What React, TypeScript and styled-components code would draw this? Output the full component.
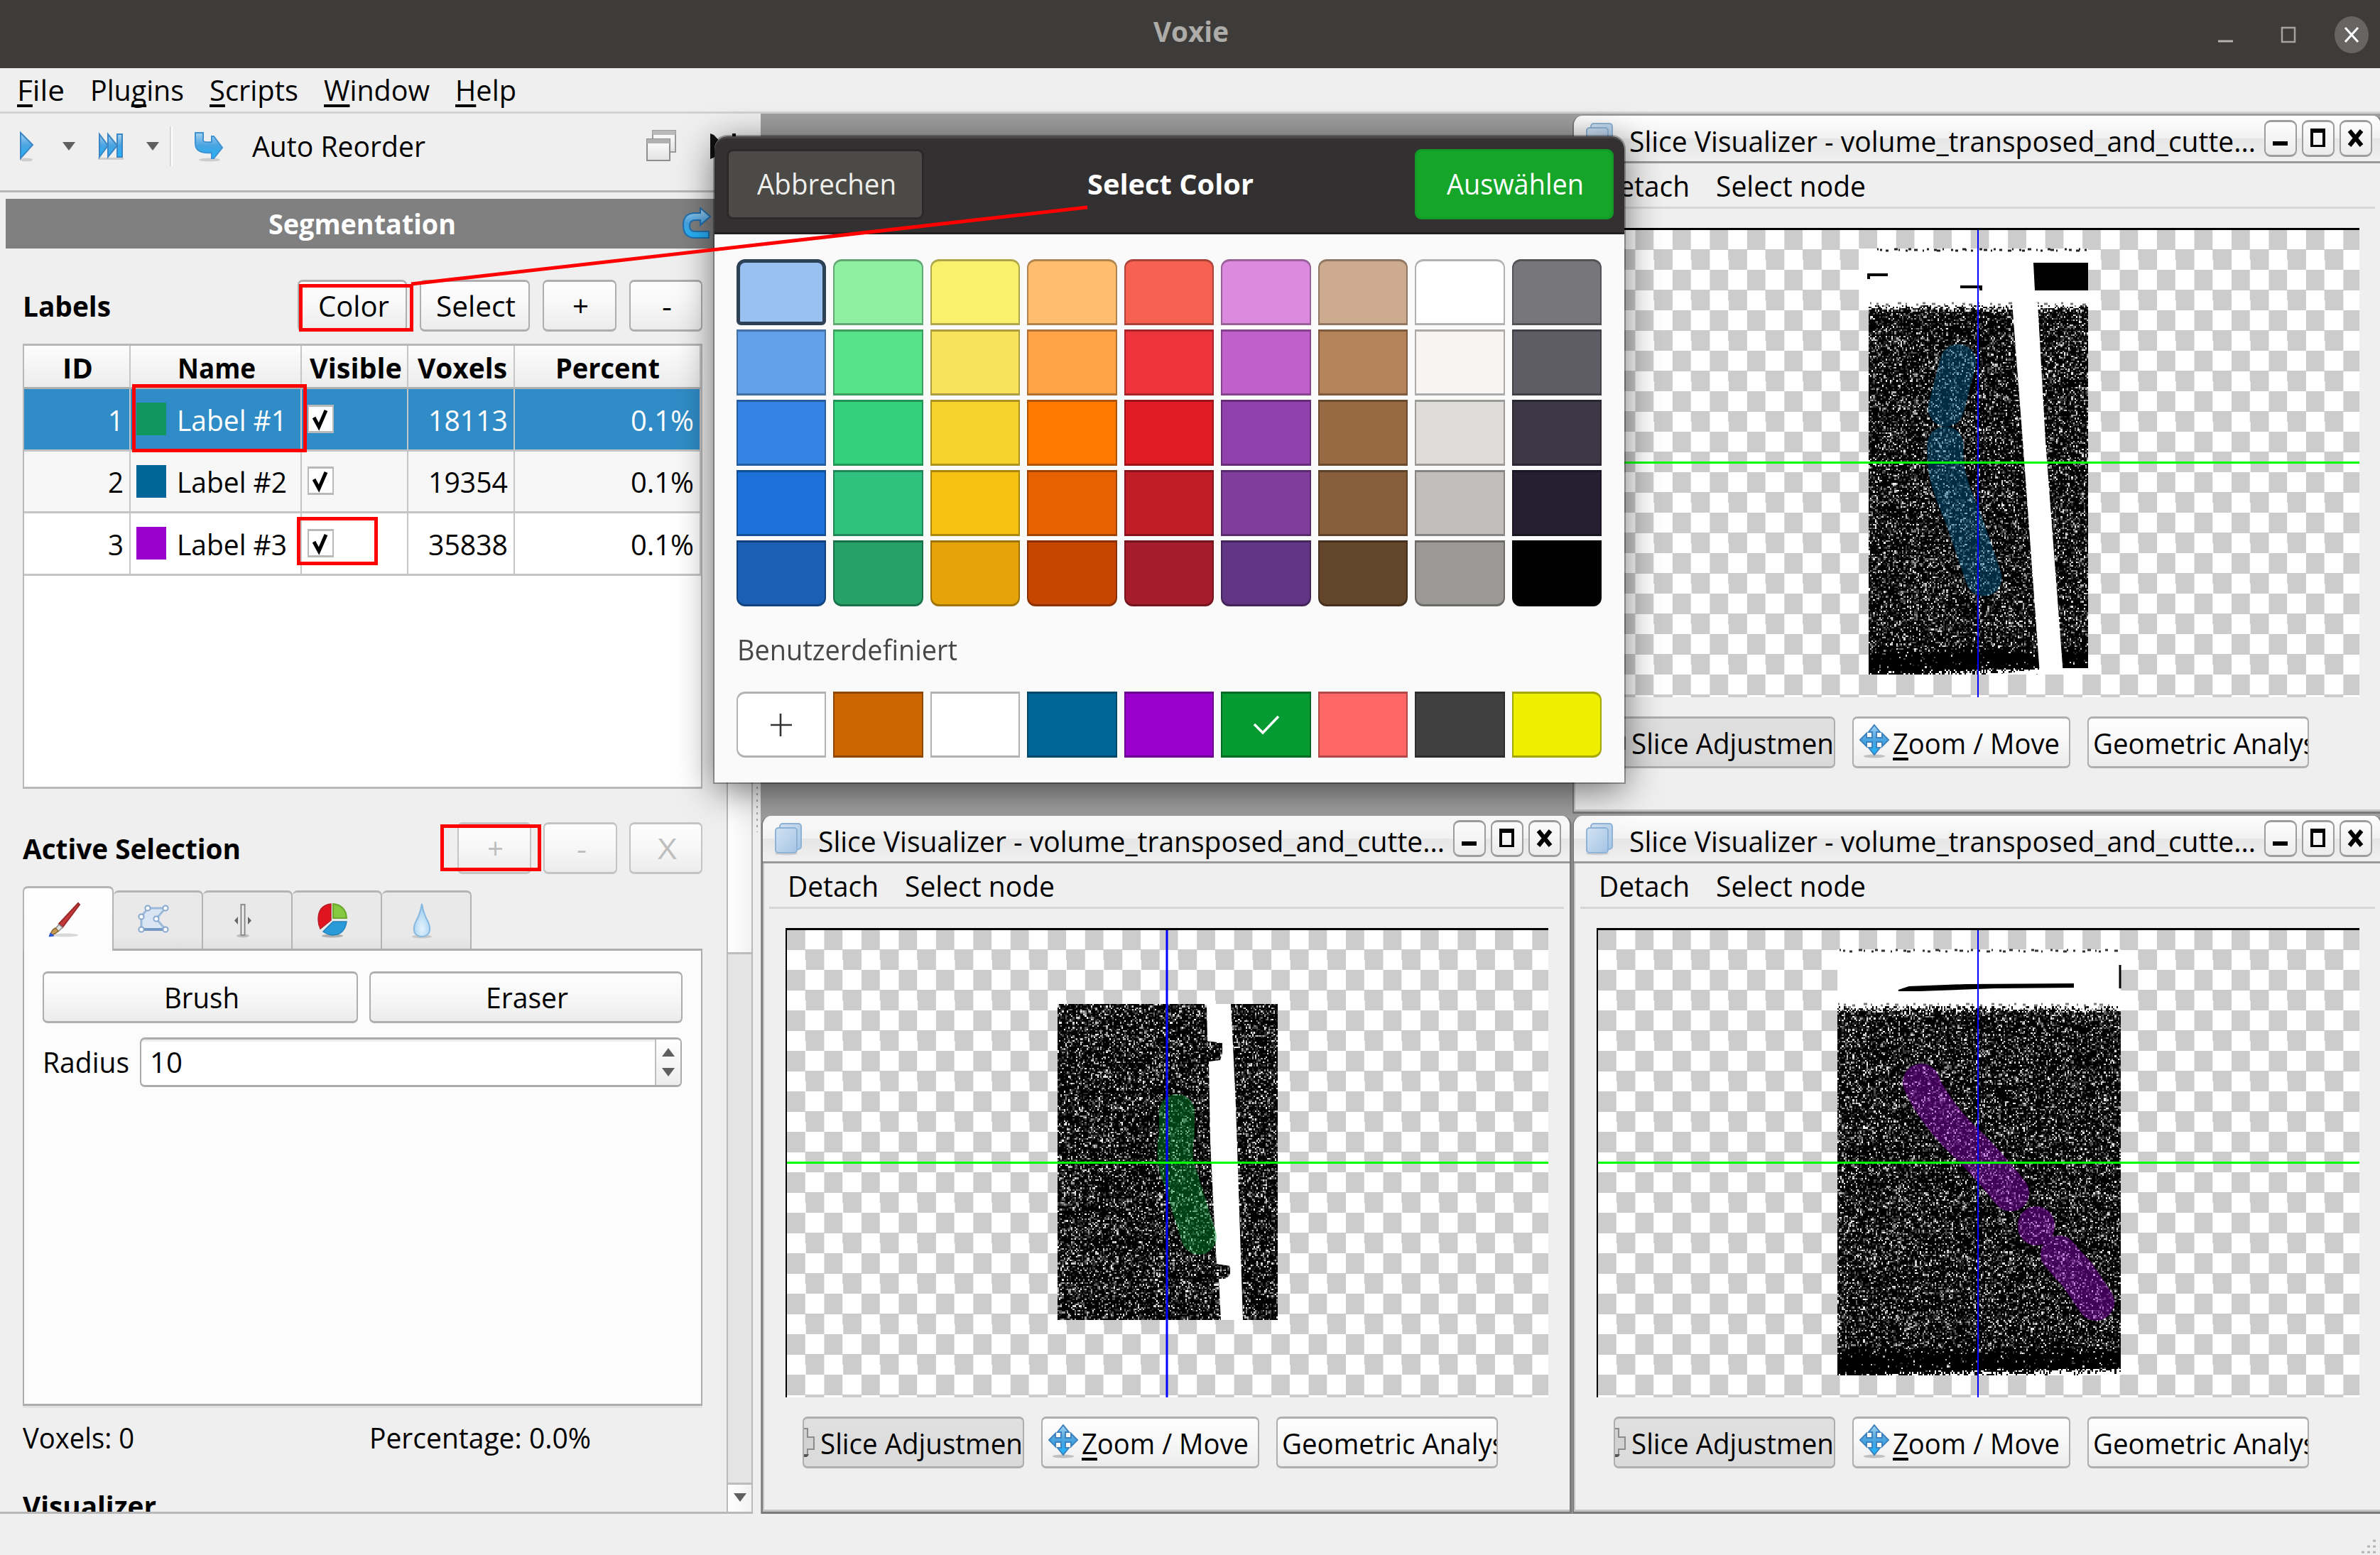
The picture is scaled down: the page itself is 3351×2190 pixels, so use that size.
import React, { useLayoutEffect, useRef } from "react";
import styled, { createGlobalStyle, css } from "styled-components";

const Global = createGlobalStyle`
  html, body { margin: 0; padding: 0; background: #efefef; }
  *, *::before, *::after { box-sizing: border-box; }
  body {
    font-family: "Open Sans", "Noto Sans", sans-serif;
    font-size: 40px;
    line-height: 56px;
    color: #000;
    overflow: hidden;
  }
`;

/* ---------- text that is fitted to a given advance width ---------- */

const FitBox = styled.span<{ $w: number; $bold?: boolean; $color?: string }>`
  display: block;
  flex: none;
  width: ${(p) => p.$w + 3}px;
  margin: 0 -3px 0 0;
  height: 56px;
  white-space: nowrap;
  font-weight: ${(p) => (p.$bold ? 700 : 400)};
  color: ${(p) => p.$color || "inherit"};
`;

const FitInner = styled.span`
  display: inline-block;
  transform-origin: 0 50%;
`;

const Mnemonic = styled.span`
  text-decoration: underline;
  text-decoration-thickness: 4px;
  text-underline-offset: 5px;
  text-decoration-skip-ink: none;
`;

type FitProps = { w: number; bold?: boolean; color?: string; children: React.ReactNode };

function Fit({ w, bold, color, children }: FitProps) {
  const ref = useRef<HTMLSpanElement>(null);
  useLayoutEffect(() => {
    const el = ref.current;
    if (!el) return;
    el.style.transform = "none";
    const natural = el.getBoundingClientRect().width;
    if (natural > 0) el.style.transform = `scaleX(${(w + 3) / natural})`;
  }, [w, children]);
  return (
    <FitBox $w={w} $bold={bold} $color={color}>
      <FitInner ref={ref}>{children}</FitInner>
    </FitBox>
  );
}

/* ---------- frame ---------- */

const Page = styled.div`
  position: relative;
  width: 3351px;
  height: 2190px;
  display: flex;
  flex-direction: column;
  overflow: hidden;
  background: #efefef;
`;

const TitleBar = styled.header`
  flex: none;
  height: 96px;
  display: grid;
  grid-template-columns: 1fr auto 1fr;
  align-items: center;
  padding-bottom: 9px;
  background: #3e3c3a;
`;

const TitleButtons = styled.div`
  display: flex;
  justify-content: flex-end;
  padding-right: 14px;
`;

const MenuBar = styled.nav`
  flex: none;
  height: 64px;
  display: flex;
  align-items: center;
  gap: 39px;
  padding-left: 24px;
  border-bottom: 3px solid #d2d2d2;
`;

const Body = styled.div`
  flex: none;
  height: 1972px;
  display: flex;
`;

const StatusBar = styled.footer`
  flex: 1;
  display: flex;
  justify-content: flex-end;
  align-items: flex-end;
`;

/* ---------- left side ---------- */

const SidePanel = styled.aside`
  flex: none;
  width: 1060px;
  display: flex;
  flex-direction: column;
  border-bottom: 3px solid #b8b8b8;
`;

const Splitter = styled.div`
  flex: none;
  width: 11px;
  display: flex;
  justify-content: center;
  padding: 930px 0 960px;
  &::after {
    content: "";
    width: 2px;
    background: repeating-linear-gradient(#a5a5a5 0 3px, transparent 3px 9px);
  }
`;

const ToolBar = styled.div`
  flex: none;
  height: 111px;
  display: flex;
  align-items: flex-start;
  padding: 16px 0 0 22px;
  border-bottom: 3px solid #b6b6b6;
`;

const ToolGroup = styled.div<{ $ml?: number }>`
  display: flex;
  align-items: center;
  height: 60px;
  margin-left: ${(p) => p.$ml || 0}px;
`;

const ToolSeparator = styled.div`
  width: 4px;
  height: 56px;
  margin: 2px 0 0 14px;
  border-left: 2px solid #d8d8d8;
  border-right: 2px solid #fff;
`;

const DockTitle = styled.div`
  flex: none;
  height: 70px;
  margin: 9px 0 0 8px;
  padding: 0 59px 0 370px;
  display: flex;
  align-items: center;
  justify-content: space-between;
  background: #808080;
  color: #fff;
`;

const DockBody = styled.div`
  flex: 1;
  min-height: 0;
  display: flex;
`;

const DockContent = styled.div`
  width: 1023px;
  padding: 44px 34px 0 32px;
  overflow: hidden;
  display: flex;
  flex-direction: column;
`;

const ScrollBar = styled.div`
  width: 37px;
  display: flex;
  flex-direction: column;
  border: solid #b9b9b9;
  border-width: 0 2px;
  background: #e4e4e4;
`;

const ScrollHandle = styled.div`
  height: 994px;
  background: linear-gradient(90deg, #fff, #f2f2f2);
  border-bottom: 3px solid #bcbcbc;
`;

const ScrollStep = styled.div`
  height: 41px;
  margin-top: auto;
  display: flex;
  align-items: center;
  justify-content: center;
  padding-bottom: 2px;
  border-top: 3px solid #bcbcbc;
  background: linear-gradient(90deg, #fff, #f2f2f2);
`;

const HeadRow = styled.div<{ $mt?: number; $gap: number }>`
  flex: none;
  height: 73px;
  margin-top: ${(p) => p.$mt || 0}px;
  display: flex;
  align-items: center;
  gap: ${(p) => p.$gap}px;
`;

const Spacer = styled.div`
  flex: 1;
`;

const raised = css`
  background: linear-gradient(#fefefe, #f8f8f8 45%, #ececec);
  border: solid #aeaeae;
  border-width: 3px 2px;
  border-radius: 7px;
`;

const PushButton = styled.div<{ $w: number; $disabled?: boolean }>`
  ${raised}
  flex: none;
  width: ${(p) => p.$w}px;
  height: 73px;
  display: flex;
  align-items: center;
  justify-content: center;
  ${(p) => p.$disabled && "color: #bebebe; border-color: #c4c4c4;"}
`;

/* ---------- label table ---------- */

const Table = styled.div`
  flex: none;
  height: 627px;
  margin-top: 17px;
  border: solid #b8b8b8;
  border-width: 3px 2px;
  background: #fff;
`;

const columns = "150px 241px 150px 150px 1fr";

const TableHead = styled.div`
  display: grid;
  grid-template-columns: ${columns};
  height: 61px;
  border-bottom: 3px solid #aeaeae;
  background: linear-gradient(#fdfdfd, #ececec);
`;

const HeadCell = styled.div`
  display: flex;
  align-items: center;
  justify-content: center;
  padding-top: 3px;
  border-right: 2px solid #c6c6c6;
  &:last-child { padding-right: 3px; }
`;

const TableRow = styled.div<{ $tone?: "selected" | "alt" }>`
  display: grid;
  grid-template-columns: ${columns};
  height: ${(p) => (p.$tone === "alt" ? 87 : 88)}px;
  border-bottom: 3px solid #c4c4c4;
  background: ${(p) =>
    p.$tone === "selected" ? "#308cc6" : p.$tone === "alt" ? "#f7f7f7" : "#fff"};
  color: ${(p) => (p.$tone === "selected" ? "#fff" : "#000")};
`;

const Cell = styled.div<{ $right?: boolean }>`
  display: flex;
  align-items: center;
  padding: 2px 11px 0 8px;
  justify-content: ${(p) => (p.$right ? "flex-end" : "flex-start")};
  border-right: 2px solid #c6c6c6;
`;

const Swatch = styled.span<{ $c: string }>`
  width: 42px;
  height: 46px;
  margin: -3px 15px 0 0;
  background: ${(p) => p.$c};
`;

const CheckBox = styled.span`
  width: 37px;
  height: 40px;
  margin-top: -4px;
  border: solid #b9b9b9;
  border-width: 3px 2px;
  background: #fff;
  display: flex;
`;

/* ---------- selection tools ---------- */

const Tabs = styled.div`
  flex: none;
  height: 88px;
  margin-top: 17px;
  display: flex;
  align-items: flex-end;
`;

const Tab = styled.div<{ $active?: boolean }>`
  width: ${(p) => (p.$active ? 128 : 126)}px;
  height: ${(p) => (p.$active ? 91 : 82)}px;
  margin-bottom: ${(p) => (p.$active ? -3 : 0)}px;
  position: relative;
  z-index: ${(p) => (p.$active ? 1 : 0)};
  display: flex;
  align-items: center;
  justify-content: center;
  padding: ${(p) => (p.$active ? "0 12px 3px 0" : "0 12px 2px 0")};
  border: solid #b4b4b4;
  border-width: 3px 2px 0 ${(p) => (p.$active ? 2 : 0)}px;
  border-radius: 7px 7px 0 0;
  background: ${(p) => (p.$active ? "linear-gradient(#fff, #fcfcfc)" : "linear-gradient(#e9e9e9 80%, #e0e0e0)")};
`;

const Pane = styled.div`
  flex: none;
  height: 644px;
  padding: 29px 27px 0 26px;
  border: solid #adadad;
  border-width: 3px 2px;
  background: #fcfcfc;
  box-shadow: 0 3px 0 #e2e2e2;
`;

const PaneRow = styled.div<{ $mt?: number; $gap: number }>`
  display: flex;
  align-items: center;
  gap: ${(p) => p.$gap}px;
  margin-top: ${(p) => p.$mt || 0}px;
`;

const SpinBox = styled.div`
  width: 763px;
  height: 70px;
  display: flex;
  align-items: center;
  justify-content: space-between;
  padding-left: 12px;
  border: solid #ababab;
  border-width: 3px 2px;
  border-radius: 7px;
  background: #fff;
  box-shadow: inset 0 3px 0 #eee;
  overflow: hidden;
`;

const SpinSteps = styled.div`
  width: 36px;
  height: 100%;
  display: flex;
  flex-direction: column;
  align-items: center;
  justify-content: center;
  gap: 16px;
  border-left: 2px solid #bdbdbd;
  background: linear-gradient(#fff, #ededed);
`;

const StatsRow = styled.div`
  flex: none;
  height: 90px;
  display: grid;
  grid-template-columns: 488px 1fr;
  align-items: center;
`;

const SectionTitle = styled.div`
  flex: none;
  height: 60px;
  margin-top: 23px;
`;

/* ---------- sub windows ---------- */

const Desktop = styled.main`
  flex: 1;
  position: relative;
  overflow: hidden;
  background: #9f9f9f;
`;

const SubWindow = styled.section<{ $x: number; $y: number }>`
  position: absolute;
  left: ${(p) => p.$x}px;
  top: ${(p) => p.$y}px;
  width: 1141px;
  height: 983px;
  display: flex;
  flex-direction: column;
  border: solid #7a7a7a;
  border-width: 0 3px 3px 2px;
  border-radius: 14px 14px 0 0;
  box-shadow: inset 2px -3px 0 #c4c4c4;
  background: #efefef;
  overflow: hidden;
`;

const SubTitle = styled.div`
  flex: none;
  height: 67px;
  display: flex;
  align-items: center;
  padding-left: 16px;
  border-bottom: 3px solid #999;
  background: linear-gradient(#ffffff, #f1f1f1 50%, #e6e6e6 50%, #f0f0f0);
`;

const SubTitleText = styled.div`
  margin: 8px 15px 0 22px;
`;

const SubButton = styled.span`
  width: 46px;
  height: 52px;
  margin-right: 7px;
  margin-top: -1px;
  display: flex;
  align-items: center;
  justify-content: center;
  border: solid #9d9d9d;
  border-width: 3px 2px;
  border-radius: 9px;
  background: linear-gradient(#fdfdfd, #ececec);
`;

const SubMenu = styled.div`
  flex: none;
  height: 64px;
  margin: 0 8px 0 9px;
  padding: 2px 0 0 26px;
  display: flex;
  align-items: center;
  gap: 40px;
  border-bottom: 3px solid #d6d6d6;
`;

const Viewport = styled.div`
  flex: none;
  position: relative;
  width: 1074px;
  height: 661px;
  margin: 27px 0 0 32px;
  border: solid #000;
  border-width: 3px 0 0 2px;
  background: repeating-conic-gradient(#fff 0 25%, #ccc 0 50%) 0 -1px / 52.48px 57px;
  overflow: hidden;
`;

const NoiseCanvas = styled.canvas<{ $x: number; $y: number; $w: number; $h: number }>`
  position: absolute;
  left: ${(p) => p.$x - 2}px;
  top: ${(p) => p.$y - 3}px;
  width: ${(p) => p.$w}px;
  height: ${(p) => p.$h}px;
  image-rendering: pixelated;
`;

const SliceDrawing = styled.svg`
  position: absolute;
  left: -2px;
  top: -3px;
`;

const SliceTools = styled.div`
  display: flex;
  gap: 24px;
  margin: 27px 0 0 56px;
`;

const SliceButton = styled.div<{ $w: number; $pressed?: boolean }>`
  ${raised}
  width: ${(p) => p.$w}px;
  height: 73px;
  padding-top: 2px;
  display: flex;
  align-items: center;
  overflow: hidden;
  ${(p) => p.$pressed && "background: linear-gradient(#e0e0e0, #dadada);"}
`;

const PressedIcon = styled.span`
  display: flex;
  margin-right: 1px;
`;

const ButtonIcon = styled.span`
  display: flex;
  margin: -6px 5px 0 8px;
`;

const ClippedLabel = styled.div`
  padding-left: 6px;
`;

/* ---------- colour dialog ---------- */

const Dialog = styled.div`
  position: absolute;
  left: 1006px;
  top: 192px;
  width: 1281px;
  height: 910px;
  border-radius: 18px 18px 0 0;
  background: #fafafa;
  box-shadow: 0 0 0 2px rgba(0, 0, 0, 0.3), 0 10px 52px rgba(0, 0, 0, 0.55);
`;

const DialogHeader = styled.div`
  height: 138px;
  display: flex;
  align-items: center;
  justify-content: space-between;
  padding: 0 15px 4px 17px;
  border-top: 3px solid #474545;
  border-bottom: 3px solid #211f1f;
  border-radius: 18px 18px 0 0;
  background: #323030;
  color: #fff;
`;

const DialogButton = styled.div<{ $w: number; $primary?: boolean }>`
  width: ${(p) => p.$w}px;
  height: 99px;
  display: flex;
  align-items: center;
  justify-content: center;
  padding-bottom: 1px;
  border: 3px solid ${(p) => (p.$primary ? "#129a26" : "#2a2828")};
  border-radius: 9px;
  background: ${(p) => (p.$primary ? "#14a529" : "#4b4a47")};
  color: ${(p) => (p.$primary ? "#fff" : "#eeeeec")};
`;

const Palette = styled.div`
  display: grid;
  grid-template-columns: repeat(9, 126.2px);
  grid-auto-rows: 93px;
  gap: 6px 10.3px;
  padding: 35px 0 0 31px;
`;

const Chip = styled.div<{ $c: string; $pos?: "top" | "bottom" | "left" | "right"; $focus?: boolean }>`
  display: flex;
  align-items: center;
  justify-content: center;
  background: ${(p) => p.$c};
  border: solid rgba(0, 0, 0, 0.3);
  border-width: 3px 2px;
  border-radius: ${(p) =>
    p.$pos === "top" ? "12px 12px 0 0"
    : p.$pos === "bottom" ? "0 0 12px 12px"
    : p.$pos === "left" ? "12px 0 0 12px"
    : p.$pos === "right" ? "0 12px 12px 0"
    : "0"};
  ${(p) => p.$focus && "border: 5px solid #2f4156; border-radius: 12px 12px 6px 6px;"}
`;

const CustomTitle = styled.div`
  height: 56px;
  margin: 33px 0 0 32px;
`;

const CustomRow = styled(Palette)`
  padding-top: 31px;
`;

const Annotations = styled.svg`
  position: absolute;
  left: 0;
  top: 0;
  pointer-events: none;
`;

/* ---------- icons ---------- */

const Triangle = ({ up }: { up?: boolean }) => (
  <svg width="20" height="12" viewBox="0 0 20 12">
    <path d={up ? "M1 12 10 0 19 12Z" : "M1 0 10 12 19 0Z"} fill="#5f5f5f" />
  </svg>
);

const BlueGradient = ({ id }: { id: string }) => (
  <linearGradient id={id} x1="0" y1="0" x2="0" y2="1">
    <stop offset="0" stopColor="#a4d2f2" />
    <stop offset="0.5" stopColor="#4aa3e0" />
    <stop offset="1" stopColor="#1fb4fb" />
  </linearGradient>
);

const PlayIcon = () => (
  <svg width="30" height="48" viewBox="0 0 30 48">
    <defs><BlueGradient id="play" /></defs>
    <ellipse cx="15" cy="43" rx="9" ry="2.5" fill="#000" opacity="0.14" />
    <path d="M7 5 24 22 7 41Z" fill="url(#play)" stroke="#3b86c4" strokeWidth="2" />
  </svg>
);

const SkipIcon = () => (
  <svg width="42" height="48" viewBox="0 0 42 48">
    <defs><BlueGradient id="skip" /></defs>
    <rect x="3" y="40" width="36" height="3" fill="#000" opacity="0.14" />
    <path d="M5 7 17 23 5 39ZM17 7 30 23 17 39ZM30 7H37V39H30Z" fill="url(#skip)" stroke="#3b86c4" strokeWidth="2" />
  </svg>
);

const ReorderIcon = () => (
  <svg width="44" height="48" viewBox="0 0 44 48">
    <defs><BlueGradient id="reorder" /></defs>
    <ellipse cx="23" cy="43" rx="15" ry="2.5" fill="#000" opacity="0.14" />
    <path d="M3 5H14V16Q15 19 26 18V10H29L41 26 29 41H26V33Q3 35 3 20Z" fill="url(#reorder)" stroke="#3f92d2" strokeWidth="2" />
  </svg>
);

const FloatIcon = () => (
  <svg width="46" height="48" viewBox="0 0 46 48">
    <defs>
      <linearGradient id="float" x1="0" y1="0" x2="0" y2="1">
        <stop offset="0" stopColor="#fff" /><stop offset="1" stopColor="#e2e2e2" />
      </linearGradient>
    </defs>
    <rect x="11" y="2" width="32" height="30" fill="url(#float)" stroke="#9a9a9a" strokeWidth="2" />
    <rect x="11" y="2" width="32" height="6" fill="#b9b9b9" />
    <rect x="3" y="14" width="32" height="30" fill="url(#float)" stroke="#8f8f8f" strokeWidth="2" />
    <rect x="3" y="14" width="32" height="6" fill="#b0b0b0" />
  </svg>
);

const StopIcon = () => (
  <svg width="40" height="36" viewBox="0 0 40 36">
    <path d="M0 0 5 2 20 18 5 34 0 36ZM31 0H36V36H31Z" fill="#111" />
  </svg>
);

const RevertIcon = () => (
  <svg width="42" height="46" viewBox="0 0 42 46">
    <defs><BlueGradient id="revert" /></defs>
    <path d="M27 1 41 13 27 25V18H20Q12 18 12 26Q12 34 20 34H39V43H20Q3 43 3 25Q3 8 20 8H27Z" fill="url(#revert)" stroke="#2270ae" strokeWidth="2" />
  </svg>
);

const CheckMark = () => (
  <svg width="33" height="34" viewBox="0 0 33 34">
    <path d="M7 15 14 28 24 5" fill="none" stroke="#000" strokeWidth="5" />
  </svg>
);

const BrushIcon = () => (
  <svg width="48" height="52" viewBox="0 0 48 52">
    <ellipse cx="26" cy="49" rx="18" ry="2.5" fill="#000" opacity="0.14" />
    <path d="M44 4 17 33 22 38 46 6Z" fill="#c43a3a" stroke="#9a2828" strokeWidth="2" />
    <path d="M17 34 12 40 16 44 22 38Z" fill="#e4e4e4" stroke="#8a8a8a" strokeWidth="1.5" />
    <path d="M12 39Q6 42 5 49Q12 48 16 43Z" fill="#c79a55" stroke="#8d6a34" strokeWidth="1.5" />
    <path d="M5 46 3 51 10 50Z" fill="#2a55d8" stroke="#2a55d8" />
  </svg>
);

const PolygonIcon = () => (
  <svg width="46" height="46" viewBox="0 0 46 46">
    <path d="M15 6H40L27 21 40 36H6V18Z" fill="#d9e5f2" stroke="#9bb9da" strokeWidth="3" />
    <path d="M6 36H40" stroke="#7599c4" strokeWidth="4" />
    {[[15, 6], [40, 6], [27, 21], [40, 36], [6, 36], [6, 18]].map(([x, y]) => (
      <circle key={`${x}-${y}`} cx={x} cy={y} r="3.6" fill="#fff" stroke="#86a8d0" strokeWidth="2" />
    ))}
  </svg>
);

const MirrorIcon = () => (
  <svg width="30" height="50" viewBox="0 0 30 50">
    <ellipse cx="15" cy="47" rx="9" ry="2.5" fill="#000" opacity="0.18" />
    <rect x="12.5" y="3" width="5" height="43" fill="#f4f4f4" stroke="#909090" strokeWidth="2.2" />
    <path d="M8 20V31L3 25.500ZM22 20V31L27 25.500Z" fill="#666" />
  </svg>
);

const PieIcon = () => (
  <svg width="46" height="50" viewBox="0 0 46 50">
    <ellipse cx="23" cy="47" rx="15" ry="2.5" fill="#000" opacity="0.25" />
    <path d="M21 25V2Q3 4 3 24Q3 31 6 37Z" fill="#e0141f" stroke="#b51c28" strokeWidth="1.5" />
    <path d="M24 22V2Q42 4 43 22Z" fill="#86c840" stroke="#69a82c" strokeWidth="2" />
    <path d="M24 27H43Q40 46 23 46Q15 45 10 41Z" fill="#2a9bd8" stroke="#1f80ba" strokeWidth="1.5" />
  </svg>
);

const DropIcon = () => (
  <svg width="32" height="52" viewBox="0 0 32 52">
    <defs><radialGradient id="drop" cx="0.5" cy="0.75" r="0.6"><stop offset="0" stopColor="#e4f3fd" /><stop offset="1" stopColor="#a4d0f0" /></radialGradient></defs>
    <ellipse cx="16" cy="49" rx="14" ry="2.5" fill="#000" opacity="0.14" />
    <path d="M16 3Q18 16 24 27Q29 36 26 44Q22 49 16 49Q10 49 6 44Q3 36 8 27Q14 16 16 3Z" fill="url(#drop)" stroke="#86b9e2" strokeWidth="2" />
  </svg>
);

const CubeIcon = () => (
  <svg width="40" height="48" viewBox="0 0 40 48">
    <defs><linearGradient id="cube" x1="0" y1="0" x2="1" y2="1"><stop offset="0" stopColor="#d3e3f3" /><stop offset="1" stopColor="#a4c4e4" /></linearGradient></defs>
    <ellipse cx="17" cy="45" rx="16" ry="2.5" fill="#000" opacity="0.12" />
    <rect x="8" y="3" width="30" height="36" rx="4" fill="url(#cube)" stroke="#8fb3d6" strokeWidth="2" />
    <rect x="2" y="9" width="30" height="35" rx="4" fill="url(#cube)" stroke="#8fb3d6" strokeWidth="2" />
  </svg>
);

const MoveIcon = () => (
  <svg width="42" height="48" viewBox="0 0 42 48">
    <defs><BlueGradient id="move" /></defs>
    <ellipse cx="21" cy="45" rx="15" ry="2.5" fill="#000" opacity="0.2" />
    <path d="M21 1 29 11H24V19H32V13L41 22 32 31V25H24V33H29L21 43 13 33H18V25H10V31L1 22 10 13V19H18V11H13Z" fill="url(#move)" stroke="#3c82bf" strokeWidth="2" />
  </svg>
);

const SliderIcon = () => (
  <svg width="22" height="50" viewBox="0 0 22 50">
    <path d="M0 4H5V16H14V33H5V42H0" fill="#d2d2d2" stroke="#8c8c8c" strokeWidth="2" />
    <path d="M0 40H7L4 44H0Z" fill="#555" />
  </svg>
);

/* ---------- slice images ---------- */

type NoiseProps = {
  x: number; y: number; w: number; h: number; seed: number;
  raggedTop?: boolean; darkBottom?: boolean;
};

// Draws the voxel noise at scan resolution; the canvas is enlarged with hard pixel edges.
function Noise({ x, y, w, h, seed, raggedTop, darkBottom }: NoiseProps) {
  const ref = useRef<HTMLCanvasElement>(null);
  const cols = Math.round(w / 2.14);
  const rows = Math.round(h / 2.3);
  useLayoutEffect(() => {
    const ctx = ref.current?.getContext("2d");
    if (!ctx) return;
    let state = seed;
    const rand = () => {
      state = (state * 1664525 + 1013904223) >>> 0;
      return state / 4294967296;
    };
    const image = ctx.createImageData(cols, rows);
    for (let r = 0; r < rows; r++) {
      const fromEnd = rows - r;
      let density = 0.35 + 0.05 * Math.sin(r / 3);
      if (darkBottom && fromEnd < 18) density = fromEnd < 14 ? 0.05 : 0.18;
      for (let c = 0; c < cols; c++) {
        let v = rand() < density ? 35 + 220 * Math.pow(rand(), 2) : 0;
        if (raggedTop && r < 5 && rand() > (r + 1) / 6) v = 255;
        if (darkBottom && fromEnd < 5 && rand() > (fromEnd + 4 - (c / cols) * 5) / 6) v = 255;
        const i = (r * cols + c) * 4;
        image.data[i] = image.data[i + 1] = image.data[i + 2] = v;
        image.data[i + 3] = 255;
      }
    }
    ctx.putImageData(image, 0, 0);
  }, []);
  return <NoiseCanvas ref={ref} width={cols} height={rows} $x={x} $y={y} $w={w} $h={h} />;
}

const speckle = (x0: number, x1: number, y: number, step: number) => {
  let d = "";
  for (let x = x0, i = 0; x < x1; x += step + ((i * 7) % 5) * 2, i++) d += `M${x} ${y + (i % 3)}h${2 + (i % 4)}`;
  return d;
};

const Crosshair = ({ x, w }: { x: number; w: number }) => (
  <>
    <path d={`M${x} 0V661`} stroke="#0000ff" strokeWidth={w} />
    <path d="M0 330.5H1074" stroke="#00ff00" strokeWidth="3" />
  </>
);

const BlueSlice = () => (
  <>
    <Noise x={383} y={106} w={309} h={523} seed={11} raggedTop darkBottom />
    <SliceDrawing width="1074" height="661" viewBox="0 0 1074 661">
      <path d="M369 29H692V109H383V88H369Z" fill="#fff" />
      <path d={speckle(395, 690, 30, 4)} stroke="#222" strokeWidth="3" />
      <path d={speckle(385, 690, 106, 9)} stroke="#777" strokeWidth="3" />
      <path d="M585 105H621L632 300 657 629H624L600 300Z" fill="#fff" />
      <path d="M600 629 692 627V620H640L560 629Z" fill="#fff" />
      <path d="M615 49H692V88H617Z" fill="#000" />
      <path d="M383 66H410M512 83H543" stroke="#000" strokeWidth="4" />
      <path d="M383 64V72M541 81V88" stroke="#000" strokeWidth="4" />
      <path stroke="#006699" strokeOpacity="0.42" fill="none" strokeLinecap="round" strokeLinejoin="round" strokeWidth="51"
        d="M509 189 Q502 215 492 254M491 305 Q490 330 495 352 Q504 382 516 408 L545 493" />
      <Crosshair x={537} w={2} />
    </SliceDrawing>
  </>
);

const GreenSlice = () => (
  <>
    <Noise x={383} y={107} w={310} h={445} seed={29} />
    <SliceDrawing width="1074" height="661" viewBox="0 0 1074 661">
      <path d="M593 107H627L630 165 634 250 639 400 644 552H613L610 494 620 494 626 488 626 476 607 473 604 420 598 300 596 188 612 186 615 176 615 162 594 159Z" fill="#fff" />
      <path stroke="#009933" strokeOpacity="0.42" fill="none" strokeLinecap="round" strokeLinejoin="round" strokeWidth="50"
        d="M551 259V290Q544 325 556 352 Q563 375 582 435" />
      <Crosshair x={537} w={3} />
    </SliceDrawing>
  </>
);

const PurpleSlice = () => (
  <>
    <Noise x={339} y={108} w={399} h={522} seed={53} raggedTop darkBottom />
    <SliceDrawing width="1074" height="661" viewBox="0 0 1074 661">
      <path d="M339 30H738V110H339Z" fill="#fff" />
      <path d={speckle(342, 736, 31, 5)} stroke="#333" strokeWidth="3" />
      <path d={speckle(340, 736, 107, 8)} stroke="#777" strokeWidth="3" />
      <path d="M425 88 440 83 520 80 671 79V83L560 84 455 88Z" fill="#000" stroke="#000" strokeWidth="2" />
      <path d="M737 52V85" stroke="#000" strokeWidth="3" />
      <path stroke="#9900cc" strokeOpacity="0.42" fill="none" strokeLinecap="round" strokeLinejoin="round" strokeWidth="52"
        d="M457 217 Q470 250 510 293 Q545 325 583 373M619 418V421M651 459 Q664 475 676 487 L703 527" />
      <Crosshair x={537} w={2} />
    </SliceDrawing>
  </>
);

function SliceWindow({ x, y, children }: { x: number; y: number; children: React.ReactNode }) {
  return (
    <SubWindow $x={x} $y={y}>
      <SubTitle>
        <CubeIcon />
        <SubTitleText><Fit w={879}>Slice Visualizer - volume_transposed_and_cutte...</Fit></SubTitleText>
        <SubButton><svg width="30" height="36"><rect x="4" y="22" width="21" height="6" fill="#000" /></svg></SubButton>
        <SubButton><svg width="30" height="36"><path d="M4 4H25V30H4ZM8 10V27H21V10Z" fill="#000" fillRule="evenodd" /></svg></SubButton>
        <SubButton><svg width="30" height="36"><path d="M6 7 23 28M23 7 6 28" stroke="#000" strokeWidth="6" /></svg></SubButton>
      </SubTitle>
      <SubMenu>
        <Fit w={125}>Detach</Fit>
        <Fit w={208}>Select node</Fit>
      </SubMenu>
      <Viewport>{children}</Viewport>
      <SliceTools>
        <SliceButton $w={312} $pressed><PressedIcon><SliderIcon /></PressedIcon><Fit w={282}>Slice Adjustmen</Fit></SliceButton>
        <SliceButton $w={307}><ButtonIcon><MoveIcon /></ButtonIcon><Fit w={232}><Mnemonic>Z</Mnemonic>oom / Move</Fit></SliceButton>
        <SliceButton $w={312}><ClippedLabel><Fit w={311}>Geometric Analys</Fit></ClippedLabel></SliceButton>
      </SliceTools>
    </SubWindow>
  );
}

/* ---------- data ---------- */

const palette = [
  ["#99c1f1", "#8ff0a4", "#f9f06b", "#ffbe6f", "#f66151", "#dc8add", "#cdab8f", "#ffffff", "#77767b"],
  ["#62a0ea", "#57e389", "#f8e45c", "#ffa348", "#ed333b", "#c061cb", "#b5835a", "#f6f5f4", "#5e5c64"],
  ["#3584e4", "#33d17a", "#f6d32d", "#ff7800", "#e01b24", "#9141ac", "#986a44", "#deddda", "#3d3846"],
  ["#1c71d8", "#2ec27e", "#f5c211", "#e66100", "#c01c28", "#813d9c", "#865e3c", "#c0bfbc", "#241f31"],
  ["#1a5fb4", "#26a269", "#e5a50a", "#c64600", "#a51d2d", "#613583", "#63452c", "#9a9996", "#000000"],
];

const custom = ["#ffffff", "#cc6600", "#ffffff", "#006699", "#9900cc", "#069a33", "#ff6666", "#404040", "#eeee00"];

const labels = [
  { id: "1", name: "Label #1", color: "#12965f", voxels: "18113", tone: "selected" as const },
  { id: "2", name: "Label #2", color: "#006699", voxels: "19354", tone: "alt" as const },
  { id: "3", name: "Label #3", color: "#9900cc", voxels: "35838", tone: undefined },
];

export default function App() {
  return (
    <Page>
      <Global />
      <TitleBar>
        <span />
        <Fit w={103} bold color="#aeaca9">Voxie</Fit>
        <TitleButtons>
          <svg width="226" height="70" viewBox="0 0 226 70">
            <path d="M12 49H33" stroke="#b5b3b0" strokeWidth="3" />
            <rect x="102" y="30" width="18" height="20" fill="none" stroke="#a5a3a0" strokeWidth="2.5" />
            <ellipse cx="200" cy="40" rx="24" ry="26" fill="#666563" />
            <path d="M191 30 209 50M209 30 191 50" stroke="#fff" strokeWidth="3" />
          </svg>
        </TitleButtons>
      </TitleBar>
      <MenuBar>
        <Fit w={64}><Mnemonic>F</Mnemonic>ile</Fit>
        <Fit w={129}>Plu<Mnemonic>g</Mnemonic>ins</Fit>
        <Fit w={122}><Mnemonic>S</Mnemonic>cripts</Fit>
        <Fit w={146}><Mnemonic>W</Mnemonic>indow</Fit>
        <Fit w={83}><Mnemonic>H</Mnemonic>elp</Fit>
      </MenuBar>

      <Body>
        <SidePanel>
          <ToolBar>
            <ToolGroup><PlayIcon /></ToolGroup>
            <ToolGroup $ml={35}><Triangle /></ToolGroup>
            <ToolGroup $ml={28}><SkipIcon /></ToolGroup>
            <ToolGroup $ml={28}><Triangle /></ToolGroup>
            <ToolSeparator />
            <ToolGroup $ml={29}><ReorderIcon /></ToolGroup>
            <ToolGroup $ml={39}><Fit w={241}>Auto Reorder</Fit></ToolGroup>
            <ToolGroup $ml={312}><FloatIcon /></ToolGroup>
            <ToolGroup $ml={46}><StopIcon /></ToolGroup>
          </ToolBar>
          <DockTitle>
            <Fit w={261} bold>Segmentation</Fit>
            <RevertIcon />
          </DockTitle>
          <DockBody>
            <DockContent>
              <HeadRow $gap={18}>
                <Fit w={121} bold>Labels</Fit>
                <Spacer />
                <PushButton $w={154}><Fit w={97}>Color</Fit></PushButton>
                <PushButton $w={155}><Fit w={109}>Select</Fit></PushButton>
                <PushButton $w={104}><Fit w={20}>+</Fit></PushButton>
                <PushButton $w={103}><Fit w={11}>-</Fit></PushButton>
              </HeadRow>

              <Table>
                <TableHead>
                  <HeadCell><Fit w={40} bold>ID</Fit></HeadCell>
                  <HeadCell><Fit w={107} bold>Name</Fit></HeadCell>
                  <HeadCell><Fit w={127} bold>Visible</Fit></HeadCell>
                  <HeadCell><Fit w={123} bold>Voxels</Fit></HeadCell>
                  <HeadCell><Fit w={144} bold>Percent</Fit></HeadCell>
                </TableHead>
                {labels.map((l) => (
                  <TableRow key={l.id} $tone={l.tone}>
                    <Cell $right><Fit w={19}>{l.id}</Fit></Cell>
                    <Cell><Swatch $c={l.color} /><Fit w={152}>{l.name}</Fit></Cell>
                    <Cell><CheckBox><CheckMark /></CheckBox></Cell>
                    <Cell $right><Fit w={109}>{l.voxels}</Fit></Cell>
                    <Cell $right><Fit w={86}>0.1%</Fit></Cell>
                  </TableRow>
                ))}
              </Table>

              <HeadRow $mt={47} $gap={17}>
                <Fit w={304} bold>Active Selection</Fit>
                <Spacer />
                <PushButton $w={104} $disabled><Fit w={20}>+</Fit></PushButton>
                <PushButton $w={104} $disabled><Fit w={11}>-</Fit></PushButton>
                <PushButton $w={103} $disabled><Fit w={24}>X</Fit></PushButton>
              </HeadRow>

              <Tabs>
                <Tab $active><BrushIcon /></Tab>
                <Tab><PolygonIcon /></Tab>
                <Tab><MirrorIcon /></Tab>
                <Tab><PieIcon /></Tab>
                <Tab><DropIcon /></Tab>
              </Tabs>
              <Pane>
                <PaneRow $gap={16}>
                  <PushButton $w={444}><Fit w={103}>Brush</Fit></PushButton>
                  <PushButton $w={441}><Fit w={113}>Eraser</Fit></PushButton>
                </PaneRow>
                <PaneRow $mt={20} $gap={18}>
                  <Fit w={119}>Radius</Fit>
                  <SpinBox>
                    <Fit w={43}>10</Fit>
                    <SpinSteps><Triangle up /><Triangle /></SpinSteps>
                  </SpinBox>
                </PaneRow>
              </Pane>
              <StatsRow>
                <Fit w={154}>Voxels: 0</Fit>
                <Fit w={309}>Percentage: 0.0%</Fit>
              </StatsRow>
              <SectionTitle><Fit w={185} bold>Visualizer</Fit></SectionTitle>
            </DockContent>
            <ScrollBar>
              <ScrollHandle />
              <ScrollStep><Triangle /></ScrollStep>
            </ScrollBar>
          </DockBody>
        </SidePanel>
        <Splitter />

        <Desktop>
          <SliceWindow x={1143} y={3}><BlueSlice /></SliceWindow>
          <SliceWindow x={1} y={989}><GreenSlice /></SliceWindow>
          <SliceWindow x={1143} y={989}><PurpleSlice /></SliceWindow>
        </Desktop>
      </Body>

      <StatusBar>
        <svg width="30" height="30" viewBox="0 0 30 30">
          <path d="M20 10h4M12 18h4M20 18h4M4 26h4M12 26h4M20 26h4" stroke="#b5b5b5" strokeWidth="3" />
        </svg>
      </StatusBar>

      <Dialog>
        <DialogHeader>
          <DialogButton $w={278}><Fit w={193}>Abbrechen</Fit></DialogButton>
          <Fit w={231} bold>Select Color</Fit>
          <DialogButton $w={280} $primary><Fit w={190}>Auswählen</Fit></DialogButton>
        </DialogHeader>
        <Palette>
          {palette.map((row, r) =>
            row.map((c, i) => (
              <Chip key={`${r}-${i}`} $c={c} $focus={r === 0 && i === 0}
                $pos={r === 0 ? "top" : r === palette.length - 1 ? "bottom" : undefined} />
            ))
          )}
        </Palette>
        <CustomTitle><Fit w={307} color="#474747">Benutzerdefiniert</Fit></CustomTitle>
        <CustomRow>
          {custom.map((c, i) => (
            <Chip key={i} $c={c} $pos={i === 0 ? "left" : i === custom.length - 1 ? "right" : undefined}>
              {i === 0 && <svg width="32" height="34" viewBox="0 0 32 34"><path d="M1 17H31M15 1V33" stroke="#333" strokeWidth="2.6" /></svg>}
              {i === 5 && <svg width="40" height="30" viewBox="0 0 40 30"><path d="M3 14 15 26 37 3" fill="none" stroke="#fff" strokeWidth="3.5" /></svg>}
            </Chip>
          ))}
        </CustomRow>
      </Dialog>

      <Annotations width="3351" height="2190" viewBox="0 0 3351 2190" fill="none" stroke="#ff0000" strokeWidth="5">
        <rect x="423.5" y="402.5" width="156" height="62" />
        <path d="M579 400 1531 292" />
        <rect x="188.5" y="543.5" width="241" height="91" />
        <rect x="420.5" y="730.5" width="109" height="63" />
        <rect x="622.5" y="1163.5" width="137" height="61" />
      </Annotations>
    </Page>
  );
}
